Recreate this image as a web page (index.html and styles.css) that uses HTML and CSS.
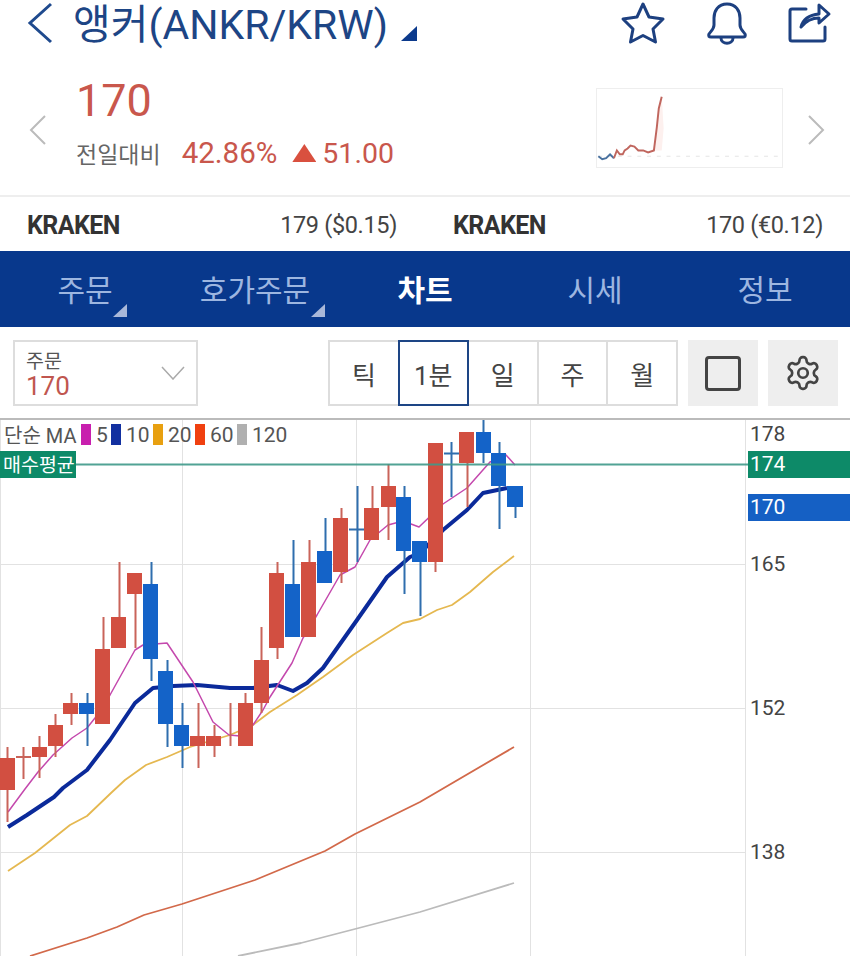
FILE: index.html
```html
<!DOCTYPE html>
<html lang="ko">
<head>
    <meta charset="UTF-8">
    <meta name="viewport" content="width=device-width, initial-scale=1.0">
    <title>앵커(ANKR/KRW)</title>
    <link rel="stylesheet" href="styles.css">
</head>
<body>
    <div class="page">
        <header class="topbar">
            <svg class="back" width="26" height="42" viewBox="0 0 26 42"><path d="M24 2 L3 21 L24 40"/></svg>
            <h1 class="title">앵커(ANKR/KRW)</h1>
            <span class="title-mark"></span>
            <div class="top-icons">
                <svg class="icon" width="46" height="44" viewBox="0 0 46 44"><path d="M23 3 L29 16 L43 18 L33 28 L35.500 41 L23 34.500 L10.500 41 L13 28 L3 18 L17 16 Z"/></svg>
                <svg class="icon" width="42" height="44" viewBox="0 0 42 44"><path d="M21 3 C12 3 8 10 8 17 V24 C8 28 5 30 3 33 C2 35 3 36 5 36 H37 C39 36 40 35 39 33 C37 30 34 28 34 24 V17 C34 10 30 3 21 3 Z"/><path d="M15 37 C15 44 27 44 27 37"/></svg>
                <svg class="icon" width="44" height="44" viewBox="0 0 44 44"><path d="M18 8 H4 Q2 8 2 10 V38 Q2 40 4 40 H35 Q37 40 37 38 V26"/><path d="M13 26 C15 18 21 14 31 13 V4 L41 13 L31 22 V17 C23 17 18 20 13 26 Z"/></svg>
            </div>
        </header>

        <section class="summary">
            <svg class="pager" width="18" height="30" viewBox="0 0 18 30"><path d="M16 1 L2 15 L16 29"/></svg>
            <div class="quote">
                <div class="price">170</div>
                <div class="change">
                    <span class="change-label">전일대비</span>
                    <span class="change-rate">42.86%</span>
                    <span class="up-mark"></span>
                    <span class="change-value">51.00</span>
                </div>
            </div>
            <svg class="spark" width="187" height="80" viewBox="0 0 187 80">
                <path class="spark-fill" d="M58 63 L60 39 L62 20 L65 8 L67 40 L65 63 Z"/>
                <path class="spark-base" d="M0 69 H186"/>
                <path class="spark-down" d="M0 69 L4 72 L8 71 L12 67 L16 71"/>
                <path class="spark-up" d="M16 71 L19 63 L22 67 L25 67 L27 63 L30 61 L33 58 L37 59 L41 63 L46 63 L51 65 L57 63 L60 39 L62 20 L65 8"/>
            </svg>
            <svg class="pager" width="18" height="30" viewBox="0 0 18 30"><path d="M2 1 L16 15 L2 29"/></svg>
        </section>

        <section class="markets">
            <div class="market">
                <span class="market-name">KRAKEN</span>
                <span class="market-price">179 ($0.15)</span>
            </div>
            <div class="market">
                <span class="market-name">KRAKEN</span>
                <span class="market-price">170 (€0.12)</span>
            </div>
        </section>

        <nav class="tabs">
            <a class="tab has-menu">주문</a>
            <a class="tab has-menu">호가주문</a>
            <a class="tab active">차트</a>
            <a class="tab">시세</a>
            <a class="tab">정보</a>
        </nav>

        <section class="controls">
            <div class="order-select">
                <div>
                    <div class="order-label">주문</div>
                    <div class="order-price">170</div>
                </div>
                <svg class="select-arrow" width="24" height="14" viewBox="0 0 24 14"><path d="M1 1 L12 13 L23 1"/></svg>
            </div>
            <div class="periods">
                <button class="period">틱</button>
                <button class="period selected">1분</button>
                <button class="period">일</button>
                <button class="period">주</button>
                <button class="period">월</button>
            </div>
            <button class="tool"><span class="tool-square"></span></button>
            <button class="tool">
                <svg class="gear" width="38" height="38" viewBox="0 0 24 24"><path d="M12.220 2h-.44a2 2 0 0 0-2 2v.18a2 2 0 0 1-1 1.730l-.43.25a2 2 0 0 1-2 0l-.15-.08a2 2 0 0 0-2.730.73l-.22.38a2 2 0 0 0 .73 2.730l.15.1a2 2 0 0 1 1 1.720v.51a2 2 0 0 1-1 1.740l-.15.09a2 2 0 0 0-.73 2.730l.22.38a2 2 0 0 0 2.730.73l.15-.08a2 2 0 0 1 2 0l.43.25a2 2 0 0 1 1 1.730V20a2 2 0 0 0 2 2h.44a2 2 0 0 0 2-2v-.18a2 2 0 0 1 1-1.730l.43-.25a2 2 0 0 1 2 0l.15.08a2 2 0 0 0 2.730-.73l.22-.39a2 2 0 0 0-.73-2.730l-.15-.08a2 2 0 0 1-1-1.740v-.5a2 2 0 0 1 1-1.740l.15-.09a2 2 0 0 0 .73-2.730l-.22-.38a2 2 0 0 0-2.730-.73l-.15.08a2 2 0 0 1-2 0l-.43-.25a2 2 0 0 1-1-1.730V4a2 2 0 0 0-2-2z"/><circle cx="12" cy="12" r="3"/></svg>
            </button>
        </section>

        <section class="chart">
            <div class="legend">
                <span class="legend-name">단순 MA</span>
                <span class="swatch ma5"></span><span class="num-1">5</span>
                <span class="swatch ma10"></span><span class="num-2">10</span>
                <span class="swatch ma20"></span><span class="num-2">20</span>
                <span class="swatch ma60"></span><span class="num-2">60</span>
                <span class="swatch ma120"></span><span>120</span>
            </div>

            <svg class="plot" width="850" height="536" viewBox="0 420 850 536">
                <!-- grid -->
                <path class="grid" d="M0.500 420 V956 M182.500 420 V956 M356.500 420 V956 M530.500 420 V956 M745.500 420 V956 M0 564.500 H745 M0 708.500 H745 M0 852.500 H745"/>

                <!-- moving averages -->
                <path class="line line-120" d="M238 956 L301 943 L355 929 L420 912 L514 883"/>
                <path class="line line-60" d="M30 956 L87 938 L117 927 L144 915 L182 904 L255 880 L325 851 L355 834 L420 802 L514 747"/>
                <path class="line line-20" d="M8 871 L35 853 L70 825 L87 816 L111 793 L125 780 L146 765 L167 757 L190 747 L230 735 L253 725 L270 712 L297 695 L323 677 L353 655 L387 633 L403 623 L420 619 L437 610 L452 605 L470 592 L493 572 L514 556"/>
                <path class="line line-10" d="M8 827 L27 815 L54 797 L63 788 L87 770 L110 740 L135 703 L153 688 L173 686 L197 685 L230 688 L253 688 L277 685 L293 691 L307 683 L323 668 L357 620 L387 577 L410 557 L420 553 L443 530 L467 510 L483 493 L507 488"/>
                <path class="line line-5" d="M8 812 L25 789 L38 772 L53 755 L72 738 L87 728 L95 718 L110 695 L135 650 L143 645 L167 643 L193 682 L213 722 L229 735 L240 736 L253 725 L263 710 L270 697 L292 663 L303 638 L317 615 L340 575 L355 567 L370 540 L388 525 L403 521 L419 527 L443 504 L467 488 L490 462 L506 455 L515 465"/>

                <!-- rising candles -->
                <path class="wick-up" d="M7.500 747 V822 M23.500 747 V779 M16 757 H31 M39.500 736 V778 M55.500 714 V757 M71.500 693 V725 M103.500 617 V724 M119.500 562 V648 M135.500 573 V648 M198.500 703 V768 M214.500 725 V757 M230.500 703 V746 M245.500 693 V746 M261.500 627 V713 M277.500 562 V659 M309.500 540 V637 M341.500 508 V583 M372.500 486 V540 M388.500 464 V540 M435.500 443 V572 M467.500 432 V507"/>
                <g class="body-up">
                    <rect x="0" y="758" width="15" height="32"/>
                    <rect x="32" y="747" width="15" height="10"/>
                    <rect x="48" y="725" width="15" height="21"/>
                    <rect x="63" y="703" width="15" height="11"/>
                    <rect x="95" y="649" width="15" height="75"/>
                    <rect x="111" y="617" width="15" height="31"/>
                    <rect x="127" y="573" width="15" height="21"/>
                    <rect x="190" y="736" width="15" height="10"/>
                    <rect x="206" y="736" width="15" height="10"/>
                    <rect x="238" y="703" width="15" height="43"/>
                    <rect x="254" y="660" width="15" height="43"/>
                    <rect x="269" y="573" width="15" height="75"/>
                    <rect x="301" y="562" width="15" height="75"/>
                    <rect x="333" y="518" width="15" height="54"/>
                    <rect x="364" y="508" width="15" height="32"/>
                    <rect x="381" y="486" width="15" height="21"/>
                    <rect x="428" y="443" width="15" height="119"/>
                    <rect x="459" y="432" width="15" height="31"/>
                </g>

                <!-- falling candles -->
                <path class="wick-down" d="M87.500 693 V746 M151.500 562 V681 M167.500 660 V747 M182.500 703 V768 M293.500 540 V637 M325.500 518 V583 M357.500 486 V562 M349 529.500 H364 M404.500 486 V594 M420.500 541 V616 M451.500 442 V497 M444 453.500 H459 M483.500 420 V463 M499.500 442 V529 M515.500 507 V518"/>
                <g class="body-down">
                    <rect x="79" y="703" width="15" height="11"/>
                    <rect x="143" y="584" width="15" height="75"/>
                    <rect x="158" y="671" width="15" height="53"/>
                    <rect x="174" y="725" width="15" height="21"/>
                    <rect x="285" y="584" width="15" height="53"/>
                    <rect x="317" y="551" width="15" height="32"/>
                    <rect x="396" y="497" width="15" height="54"/>
                    <rect x="412" y="541" width="15" height="21"/>
                    <rect x="476" y="432" width="15" height="21"/>
                    <rect x="491" y="453" width="15" height="33"/>
                    <rect x="507" y="486" width="16" height="21"/>
                </g>

                <!-- average buy price -->
                <path class="avg-line" d="M76 464.500 H748"/>
                <rect class="avg-tag" x="0" y="451" width="76" height="27"/>
                <text class="avg-text" x="3" y="472">매수평균</text>

                <!-- price axis -->
                <text class="axis" x="750" y="441">178</text>
                <text class="axis" x="750" y="571">165</text>
                <text class="axis" x="750" y="715">152</text>
                <text class="axis" x="750" y="859">138</text>
                <rect class="axis-avg" x="748" y="451" width="102" height="27"/>
                <text class="axis-tag" x="750" y="471">174</text>
                <rect class="axis-now" x="748" y="494" width="102" height="27"/>
                <text class="axis-tag" x="750" y="514">170</text>
            </svg>
        </section>
    </div>
</body>
</html>
```

FILE: styles.css
```css
* {
    box-sizing: border-box;
}

body {
    margin: 0;
    background: #fff;
    font-family: Roboto, 'Noto Sans CJK KR', sans-serif;
}

.page {
    width: 850px;
    height: 956px;
    overflow: hidden;
}

/* top bar */
.topbar {
    height: 66px;
    display: flex;
    align-items: flex-start;
    padding-left: 27px;
}

.back {
    margin-top: 2px;
    fill: none;
    stroke: #1f4a8e;
    stroke-width: 3;
}

.title {
    margin: -3px 0 0 20px;
    font-size: 41px;
    line-height: 56px;
    font-weight: 400;
    color: #1d4585;
    white-space: nowrap;
}

.title-mark {
    width: 16px;
    height: 15px;
    margin: 26px 0 0 13px;
    background: #0c3a8c;
    clip-path: polygon(100% 0, 100% 100%, 0 100%);
}

.top-icons {
    margin-left: auto;
    margin-top: 1px;
    padding-right: 18px;
    display: flex;
    gap: 40px;
}

.icon {
    fill: none;
    stroke: #1d4080;
    stroke-width: 3;
    stroke-linejoin: round;
    stroke-linecap: round;
}

/* price summary */
.summary {
    height: 131px;
    display: flex;
    align-items: flex-start;
    border-bottom: 2px solid #eee;
    padding-left: 29px;
}

.pager {
    margin-top: 49px;
    fill: none;
    stroke: #bbb;
    stroke-width: 2;
    flex: none;
}

.quote {
    margin-left: 29px;
    width: 520px;
}

.price {
    margin-top: 5px;
    font-size: 45px;
    line-height: 60px;
    color: #c9574c;
}

.change {
    display: flex;
    align-items: center;
    height: 44px;
    color: #c9574c;
    font-size: 29.500px;
    white-space: nowrap;
}

.change-label {
    font-size: 23px;
    color: #666;
    margin-right: 21px;
}

.up-mark {
    width: 24px;
    height: 18px;
    margin: 0 7px 0 15px;
    background: #d9503f;
    clip-path: polygon(50% 0, 100% 100%, 0 100%);
}

.change-value {
    font-size: 28.500px;
    margin-left: -1px;
}

.spark {
    margin-top: 22px;
    margin-right: 24px;
    flex: none;
    border: 1px solid #eee;
    fill: none;
}

.spark-fill {
    fill: #fdf0ee;
}

.spark-base {
    stroke: #e3e3e3;
    stroke-dasharray: 4 6;
}

.spark-down {
    stroke: #49719f;
    stroke-width: 2;
}

.spark-up {
    stroke: #c0665e;
    stroke-width: 2;
}

/* exchange prices */
.markets {
    height: 54px;
    display: flex;
    padding: 2px 0 0 27px;
    gap: 56px;
}

.market {
    width: 370px;
    display: flex;
    align-items: center;
    justify-content: space-between;
}

.market-name {
    font-size: 25px;
    font-weight: 700;
    letter-spacing: -0.6px;
    color: #333;
}

.market-price {
    font-size: 23.500px;
    letter-spacing: -0.35px;
    color: #444;
}

/* tabs */
.tabs {
    height: 76px;
    display: grid;
    grid-template-columns: repeat(5, 1fr);
    background: #08388c;
}

.tab {
    display: flex;
    align-items: center;
    justify-content: center;
    font-size: 30px;
    color: #9db6e0;
    padding-bottom: 2px;
}

.tab.active {
    color: #fff;
    font-weight: 700;
}

.has-menu {
    position: relative;
}

.has-menu::after {
    content: '';
    position: absolute;
    width: 14px;
    height: 13px;
    bottom: 10px;
    background: #a9b8d9;
    clip-path: polygon(100% 0, 100% 100%, 0 100%);
}

.has-menu:nth-child(1)::after {
    left: 113px;
}

.has-menu:nth-child(2)::after {
    left: 141px;
}

/* controls above the chart */
.controls {
    height: 93px;
    padding: 13px 12px 0 13px;
    display: flex;
    align-items: flex-start;
    border-bottom: 2px solid #bbb;
}

.order-select {
    width: 185px;
    height: 66px;
    border: 2px solid #ddd;
    padding: 7px 11px 0 11px;
    display: flex;
    justify-content: space-between;
    align-items: flex-start;
}

.order-label {
    font-size: 19.500px;
    line-height: 25px;
    color: #555;
}

.order-price {
    font-size: 26px;
    line-height: 25px;
    color: #c0564f;
}

.select-arrow {
    margin-top: 17px;
    fill: none;
    stroke: #aaa;
    stroke-width: 1.500;
}

.periods {
    margin-left: 130px;
    width: 350px;
    height: 66px;
    display: flex;
    border: 2px solid #ddd;
}

.period {
    flex: 1;
    border: 0;
    border-right: 2px solid #ddd;
    background: #fff;
    padding: 0;
    font-family: inherit;
    font-size: 26px;
    color: #444;
}

.period:last-child {
    border-right: 0;
}

.period.selected {
    margin: -2px 0 -2px -2px;
    border: 2px solid #1d4585;
    flex: none;
    width: 71px;
}

.tool {
    width: 70px;
    height: 66px;
    margin-left: 10px;
    border: 0;
    padding: 0;
    background: #eee;
    display: flex;
    align-items: center;
    justify-content: center;
}

.tool-square {
    width: 36px;
    height: 35px;
    border: 3px solid #444;
    border-radius: 4px;
}

.gear {
    fill: none;
    stroke: #444;
    stroke-width: 1.700;
}

/* chart */
.chart {
    position: relative;
    height: 536px;
}

.plot {
    display: block;
}

.legend {
    position: absolute;
    top: 4px;
    left: 4px;
    height: 21px;
    display: flex;
    align-items: center;
    font-size: 21px;
    color: #555;
}

.legend-name {
    font-size: 20px;
    width: 77px;
}

.swatch {
    width: 10px;
    height: 21px;
    margin-right: 5px;
}

.num-1 {
    width: 15px;
}

.num-2 {
    width: 27px;
}

.ma5 { background: #c81fae; }
.ma10 { background: #1230a0; }
.ma20 { background: #e8a010; }
.ma60 { background: #f04010; }
.ma120 { background: #b0b0b0; }

.grid {
    fill: none;
    stroke: #e2e2e2;
}

.line {
    fill: none;
    stroke-linejoin: round;
}

.line-5 { stroke: #c448ad; stroke-width: 1.500; }
.line-10 { stroke: #0b2a9a; stroke-width: 4; }
.line-20 { stroke: #e5b850; stroke-width: 1.800; }
.line-60 { stroke: #d2694a; stroke-width: 1.800; }
.line-120 { stroke: #bbb; stroke-width: 1.800; }

.wick-up {
    fill: none;
    stroke: #c9645a;
    stroke-width: 2;
}

.wick-down {
    fill: none;
    stroke: #2f6eae;
    stroke-width: 2;
}

.body-up {
    fill: #d24f41;
}

.body-down {
    fill: #1463c8;
}

.avg-line {
    stroke: #3f9a8a;
    stroke-width: 2;
    opacity: 0.9;
}

.avg-tag,
.axis-avg {
    fill: #0d8a68;
}

.axis-now {
    fill: #1560c4;
}

.avg-text {
    font-size: 19.500px;
    fill: #fff;
}

.axis {
    font-size: 21px;
    fill: #444;
}

.axis-tag {
    font-size: 21px;
    fill: #fff;
}
```
